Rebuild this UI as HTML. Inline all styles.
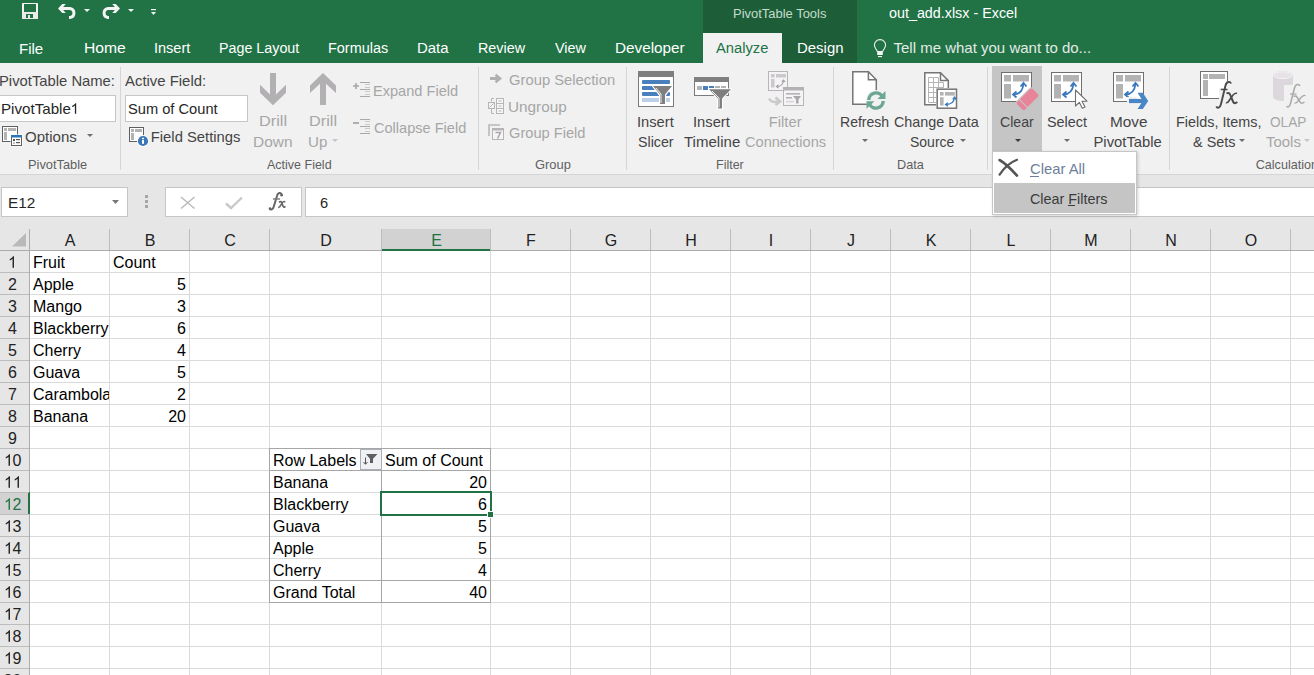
<!DOCTYPE html>
<html><head><meta charset="utf-8">
<style>
html,body{margin:0;padding:0;width:1314px;height:675px;overflow:hidden;background:#fff;font-family:"Liberation Sans",sans-serif}
.a{position:absolute}
.t{position:absolute;line-height:1;white-space:nowrap;transform-origin:0 0}
.bp{display:inline-block;width:0;height:0}
svg{position:absolute;overflow:visible}
</style></head><body>
<!-- title & tabs -->
<div class="a" style="left:0;top:0;width:1314px;height:63px;background:#217346"></div>
<div class="a" style="left:703px;top:0;width:154px;height:63px;background:#1d5e39"></div>
<div class="a" style="left:703px;top:33px;width:79px;height:30px;background:#f1f1f1"></div>
<!-- QAT icons -->
<svg style="left:0;top:0" width="170" height="30" viewBox="0 0 170 30">
 <rect x="22" y="3" width="16" height="16" rx="0.8" fill="#f4f4f4"/>
 <rect x="22" y="12" width="16" height="7" rx="0.8" fill="#ebebeb"/>
 <rect x="24" y="4" width="12" height="8" fill="#217346"/>
 <rect x="26" y="14" width="7" height="4" fill="#217346"/>
 <rect x="28" y="15" width="2" height="3" fill="#ebebeb"/>
 <g>
  <polygon points="58,8.5 62.3,4 65.8,4 61.8,8.5 65.8,13 62.3,13" fill="#f4f4f4"/>
  <path d="M61 8.5 H70 A4.6 4.6 0 0 1 70 17.6 H69" fill="none" stroke="#f4f4f4" stroke-width="3"/>
 </g>
 <g transform="translate(178 0) scale(-1 1)">
  <polygon points="58,8.5 62.3,4 65.8,4 61.8,8.5 65.8,13 62.3,13" fill="#f4f4f4"/>
  <path d="M61 8.5 H70 A4.6 4.6 0 0 1 70 17.6 H69" fill="none" stroke="#f4f4f4" stroke-width="3"/>
 </g>
 <polygon points="84,9 90,9 87,12" fill="#f0f4f1"/>
 <polygon points="128,9 134,9 131,12" fill="#f0f4f1"/>
 <rect x="151" y="9" width="5" height="1.2" fill="#f0f4f1"/>
 <polygon points="151,12 156,12 153.5,15" fill="#f0f4f1"/>
</svg>
<!-- lightbulb -->
<svg style="left:0;top:0" width="900" height="60" viewBox="0 0 900 60">
 <path d="M880 39.6 C876.6 39.6 874.4 42.2 874.4 45.1 C874.4 47.6 876.2 49 877.4 51.5 H882.6 C883.8 49 885.6 47.6 885.6 45.1 C885.6 42.2 883.4 39.6 880 39.6 Z" fill="none" stroke="#f0f0f0" stroke-width="1.1"/>
 <rect x="877.2" y="52" width="5.6" height="3" fill="#f4f4f4"/>
 <rect x="878" y="56" width="4" height="1.1" fill="#f4f4f4"/>
</svg>
<!-- ribbon -->
<div class="a" style="left:0;top:63px;width:1314px;height:111px;background:#f1f1f1"></div>
<div class="a" style="left:0;top:174px;width:1314px;height:1px;background:#d5d5d5"></div>
<div class="a" style="left:0;top:175px;width:1314px;height:54px;background:#e6e6e6"></div>
<!-- separators -->
<div class="a" style="left:120px;top:67px;width:1px;height:103px;background:#d5d5d5"></div>
<div class="a" style="left:478px;top:67px;width:1px;height:103px;background:#d5d5d5"></div>
<div class="a" style="left:626px;top:67px;width:1px;height:103px;background:#d5d5d5"></div>
<div class="a" style="left:833px;top:67px;width:1px;height:103px;background:#d5d5d5"></div>
<div class="a" style="left:987px;top:67px;width:1px;height:103px;background:#d5d5d5"></div>
<div class="a" style="left:1169px;top:67px;width:1px;height:103px;background:#d5d5d5"></div>
<!-- inputs -->
<div class="a" style="left:-1px;top:95px;width:117px;height:27px;background:#fff;border:1px solid #c6c6c6;box-sizing:border-box"></div>
<div class="a" style="left:125px;top:95px;width:123px;height:27px;background:#fff;border:1px solid #c6c6c6;box-sizing:border-box"></div>
<!-- clear highlight -->
<div class="a" style="left:992px;top:66px;width:50px;height:86px;background:#c5c5c5"></div>

<!-- ribbon icons (page coordinates) -->
<svg style="left:0;top:0" width="1314" height="230" viewBox="0 0 1314 230">
 <!-- options -->
 <rect x="2.5" y="126.5" width="15" height="15" fill="#fff" stroke="#5f5f5f"/>
 <rect x="4" y="128" width="3" height="3" fill="#b3b3b3"/><rect x="8" y="128" width="8" height="3" fill="#b3b3b3"/>
 <rect x="4" y="132" width="3" height="8" fill="#b3b3b3"/>
 <rect x="10.5" y="134.5" width="12" height="12" fill="#fff"/>
 <rect x="11.5" y="135.5" width="10" height="10" fill="#fff" stroke="#5f5f5f"/>
 <rect x="11" y="135" width="11" height="2.5" fill="#2e75b6"/>
 <rect x="13" y="139" width="2" height="2" fill="#555"/><rect x="16" y="139" width="4" height="1.2" fill="#555"/>
 <rect x="13" y="142" width="2" height="2" fill="#c5c5c5"/><rect x="16" y="142" width="4" height="1.2" fill="#555"/>
 <polygon points="87,134 93,134 90,137" fill="#6d6d6d"/>
 <!-- field settings -->
 <rect x="129.5" y="127.5" width="14" height="14" fill="#fff" stroke="#5f5f5f"/>
 <rect x="131" y="129" width="3" height="3" fill="#b3b3b3"/><rect x="135" y="129" width="7" height="3" fill="#b3b3b3"/>
 <rect x="131" y="133" width="3" height="7" fill="#b3b3b3"/>
 <circle cx="143" cy="141" r="6" fill="#fff"/>
 <circle cx="143" cy="141" r="5.1" fill="#3c77ba"/>
 <rect x="142" y="137.8" width="2" height="1.2" fill="#fff"/><rect x="142" y="139.8" width="2" height="4" fill="#fff"/>
 <!-- drill down / up -->
 <polygon points="260,84.8 270,94.6 270,73 276,73 276,94.6 286,84.8 286,92.7 273,105.2 260,92.7" fill="#b2b0b2"/>
 <polygon points="323,73 336,85.5 336,93 326,83.8 326,105 320,105 320,83.8 310,93 310,85.5" fill="#b2b0b2"/>
 <polygon points="332,139 338,139 335,142" fill="#c6c6c6"/>
 <!-- expand / collapse -->
 <path d="M353 86h6M356 83v6" stroke="#a6a6a6" stroke-width="1.6"/>
 <path d="M360 82.5h10M360 89.5h10M360 96.5h10" stroke="#a8a8a8" stroke-width="1"/>
 <path d="M365 84.5h5M365 87.5h5M365 91.5h5M365 94.5h5" stroke="#c9c9c9" stroke-width="1"/>
 <path d="M353 123h6" stroke="#a6a6a6" stroke-width="1.8"/>
 <path d="M360 119.5h10M360 126.5h10M360 133.5h10" stroke="#a8a8a8" stroke-width="1"/>
 <path d="M365 121.5h5M365 124.5h5M365 128.5h5M365 131.5h5" stroke="#c9c9c9" stroke-width="1"/>
 <!-- group icons -->
 <path d="M490 78.5h8" stroke="#b0b0b0" stroke-width="3"/>
 <path d="M495.5 74.8 L500 78.5 L495.5 82.2" fill="none" stroke="#b0b0b0" stroke-width="2.6"/>
 <rect x="488.5" y="102.5" width="6" height="6" fill="#f3f3f3" stroke="#b5b5b5"/>
 <path d="M489.5 107.5 L493.5 103.5" stroke="#b5b5b5"/>
 <path d="M494 98.5h-2.5v3M491.5 109v4.5h2.5" fill="none" stroke="#b5b5b5"/>
 <rect x="496.5" y="98.5" width="7" height="15" fill="#f7f7f7" stroke="#b5b5b5"/>
 <path d="M496.5 103.5h7M496.5 108.5h7" stroke="#b5b5b5"/>
 <path d="M498.5 101h3M498.5 106h3M498.5 111h3" stroke="#b5b5b5"/>
 <path d="M489 136V125h11" fill="none" stroke="#b8b8b8" stroke-width="1.6"/>
 <rect x="492.5" y="128.5" width="11" height="11" fill="#f7f4f7" stroke="#b5b5b5"/>
 <rect x="492.5" y="128.5" width="11" height="2" fill="#b5b5b5"/>
 <path d="M495.5 132.5h5l-3 6" fill="none" stroke="#a6a6a6" stroke-width="1.5"/>
 <!-- insert slicer -->
 <rect x="638.5" y="71.5" width="35" height="35" fill="#fff" stroke="#7b7b7b"/>
 <rect x="638" y="71" width="36" height="6" fill="#7f7f7f"/>
 <rect x="642" y="80" width="28" height="4" rx="1" fill="#4a7fbe"/>
 <rect x="642" y="86" width="28" height="4" rx="1" fill="#4a7fbe"/>
 <rect x="642" y="92" width="28" height="4" rx="1" fill="#4a7fbe"/>
 <rect x="642" y="98" width="28" height="4" fill="#bcd0e7"/>
 <path d="M651 85 H673.5 L666 95.5 V105 H659 V95.5 Z" fill="#fff"/>
 <path d="M653 86 H672 L665 94.5 V104 H660 V94.5 Z" fill="#7f7f7f"/>
 <path d="M656 88 L661 94 V103" fill="none" stroke="#fff" stroke-width="0.9"/>
 <!-- insert timeline -->
 <rect x="694.5" y="77.5" width="34" height="18" fill="#fff" stroke="#7b7b7b"/>
 <rect x="694" y="77" width="35" height="5" fill="#7f7f7f"/>
 <rect x="697" y="86" width="5" height="4" fill="#b3b3b3"/>
 <rect x="703" y="86" width="5" height="4" fill="#4a7fbe"/>
 <rect x="709" y="86" width="5" height="2" fill="#4a7fbe"/>
 <rect x="715" y="86" width="5" height="2" fill="#b3b3b3"/>
 <rect x="721" y="86" width="5" height="2" fill="#b3b3b3"/>
 <path d="M707.5 88.5 H732.5 L723 99 V109.5 H717 V99 Z" fill="#fff"/>
 <path d="M709 89.2 H731 L722 98.5 V108.5 H718 V98.5 Z" fill="#7f7f7f"/>
 <path d="M712 91 L719 98 V107.5" fill="none" stroke="#fff" stroke-width="0.9"/>
 <!-- filter connections -->
 <rect x="768.5" y="71.5" width="19" height="19" fill="#f6f3f6" stroke="#b8b5b8"/>
 <rect x="771" y="74" width="3.5" height="3.5" fill="#cbc8cb"/><rect x="776" y="74" width="10" height="3.5" fill="#cbc8cb"/>
 <rect x="771" y="79" width="3.5" height="8.5" fill="#cbc8cb"/>
 <path d="M777 86.5 C780 86.5 783 85 783.5 80.5" fill="none" stroke="#9c9c9c" stroke-width="1.1"/>
 <path d="M778.5 84.8 L776.5 86.5 L778.5 88.2M781.8 82 L783.5 80 L785.2 82" fill="none" stroke="#9c9c9c" stroke-width="1.1"/>
 <rect x="783.5" y="87.5" width="20" height="18" fill="#f6f3f6" stroke="#b8b5b8"/>
 <rect x="783" y="87" width="21" height="3.5" fill="#b5b2b5"/>
 <rect x="786" y="93" width="14" height="1.6" fill="#b5b2b5"/>
 <rect x="786" y="97" width="6" height="1.6" fill="#b5b2b5"/>
 <rect x="786" y="100.8" width="8" height="1.6" fill="#d8d5d8"/>
 <path d="M793 96 H801 L798.5 99.5 V103.5 H796 V99.5 Z" fill="#a9a7a9"/>
 <path d="M769 98.5 C771 102.5 775 102.5 779 101.5" fill="none" stroke="#cacaca" stroke-width="2.4"/>
 <path d="M775.5 97.5 L780 101.5 L775.5 105" fill="none" stroke="#cacaca" stroke-width="2.6"/>
 <!-- refresh -->
 <path d="M852.8 71.8 H868.4 L876.3 79.7 V104.2 H852.8 Z" fill="#fff" stroke="#757575" stroke-width="1.5"/>
 <path d="M868.4 71.8 V79.7 H876.3" fill="none" stroke="#757575" stroke-width="1.5"/>
 <circle cx="876" cy="100" r="10" fill="#f1f1f1"/>
 <path d="M868.8 100 A7.2 7.2 0 0 1 882.5 97" fill="none" stroke="#6ba793" stroke-width="3.4"/>
 <polygon points="885.5,91 885.5,99 877.5,99" fill="#6ba793"/>
 <path d="M883.2 101 A7.2 7.2 0 0 1 869.5 104" fill="none" stroke="#6ba793" stroke-width="3.4"/>
 <polygon points="866.5,101.2 866.5,108.8 874.5,101.2" fill="#6ba793"/>
 <polygon points="862,139 868,139 865,142" fill="#6d6d6d"/>
 <!-- change data source -->
 <path d="M924.8 72.8 H940.5 L948.3 80.6 V104.8 H924.8 Z" fill="#fff" stroke="#757575" stroke-width="1.5"/>
 <path d="M940.5 72.8 V80.6 H948.3" fill="none" stroke="#757575" stroke-width="1.5"/>
 <path d="M928.5 77.5h10M928.5 82.5h15M928.5 87.5h15M928.5 92.5h15M928.5 97.5h15M928.5 102.5h10M928.5 77.5v25M933.5 77.5v25M938.5 77.5v25M943.5 82.5v20" fill="none" stroke="#b5b5b5" stroke-width="1"/>
 <rect x="936" y="88" width="22" height="22" fill="#f1f1f1"/>
 <rect x="937.2" y="89.2" width="19.3" height="19" fill="#fff" stroke="#757575" stroke-width="1.5"/>
 <rect x="940" y="92" width="3.6" height="3.6" fill="#b3b3b3"/><rect x="945" y="92" width="9.8" height="3.6" fill="#b3b3b3"/>
 <rect x="940" y="97.2" width="3.6" height="8.3" fill="#b3b3b3"/>
 <path d="M946 104.5 C950 104.5 954 103 954.5 97.5" fill="none" stroke="#3a78bd" stroke-width="1.3"/>
 <path d="M948 102.8 L945.6 104.5 L948 106.2M952.8 99.5 L954.5 97.2 L956.2 99.5" fill="none" stroke="#3a78bd" stroke-width="1.3"/>
 <polygon points="960,139 966,139 963,142" fill="#6d6d6d"/>
 <!-- clear -->
 <g transform="translate(1001 72)"><rect x="0.5" y="0.5" width="30" height="29" fill="#fff" stroke="#6f6f6f"/>
   <rect x="3" y="3" width="7" height="6.5" fill="#b3b3b3"/><rect x="12" y="3" width="16" height="6.5" fill="#b3b3b3"/>
   <rect x="3" y="12" width="7" height="14.5" fill="#b3b3b3"/><path d="M12.5 22.5 C17 22.5 21.5 20.5 22.5 12" fill="none" stroke="#3a78bd" stroke-width="1.8"/>
   <path d="M15.5 19.5 L12 22.5 L15.5 25.5" fill="none" stroke="#3a78bd" stroke-width="1.8"/>
   <path d="M19.5 14.5 L22.5 11 L25.5 14.5" fill="none" stroke="#3a78bd" stroke-width="1.8"/></g>
 <g transform="translate(1027.6 99.3) rotate(-45)">
  <rect x="-11.5" y="-6" width="23" height="12" rx="2.5" fill="#e8849a" stroke="#c5c5c5" stroke-width="1.2"/>
  <path d="M-6 -6.5 V6.5" stroke="#c5c5c5" stroke-width="1.2"/>
 </g>
 <polygon points="1015,139 1021,139 1018,142" fill="#3a3a3a"/>
 <!-- select -->
 <g transform="translate(1051 72)"><rect x="0.5" y="0.5" width="30" height="29" fill="#fff" stroke="#6f6f6f"/>
   <rect x="3" y="3" width="7" height="6.5" fill="#b3b3b3"/><rect x="12" y="3" width="16" height="6.5" fill="#b3b3b3"/>
   <rect x="3" y="12" width="7" height="14.5" fill="#b3b3b3"/><path d="M12.5 22.5 C17 22.5 21.5 20.5 22.5 12" fill="none" stroke="#3a78bd" stroke-width="1.8"/>
   <path d="M15.5 19.5 L12 22.5 L15.5 25.5" fill="none" stroke="#3a78bd" stroke-width="1.8"/>
   <path d="M19.5 14.5 L22.5 11 L25.5 14.5" fill="none" stroke="#3a78bd" stroke-width="1.8"/></g>
 <path d="M1075.5 90 V106 L1079.3 102.3 L1082.3 108.3 L1085 107 L1082 101.2 L1087 101.2 Z" fill="#fff" stroke="#6f6f6f" stroke-width="1.1" stroke-linejoin="round"/>
 <polygon points="1064,139 1070,139 1067,142" fill="#6d6d6d"/>
 <!-- move -->
 <g transform="translate(1113 72)"><rect x="0.5" y="0.5" width="30" height="29" fill="#fff" stroke="#6f6f6f"/>
   <rect x="3" y="3" width="7" height="6.5" fill="#b3b3b3"/><rect x="12" y="3" width="16" height="6.5" fill="#b3b3b3"/>
   <rect x="3" y="12" width="7" height="14.5" fill="#b3b3b3"/><path d="M12.5 22.5 C17 22.5 21.5 20.5 22.5 12" fill="none" stroke="#3a78bd" stroke-width="1.8"/>
   <path d="M15.5 19.5 L12 22.5 L15.5 25.5" fill="none" stroke="#3a78bd" stroke-width="1.8"/>
   <path d="M19.5 14.5 L22.5 11 L25.5 14.5" fill="none" stroke="#3a78bd" stroke-width="1.8"/></g>
 <rect x="1127" y="97" width="10" height="8" fill="#f1f1f1"/>
 <path d="M1129 101 H1144" stroke="#4a86c5" stroke-width="4.2"/>
 <polygon points="1137.5,92.8 1142.8,92.8 1148.2,101 1142.8,109 1137.5,109 1142.8,101" fill="#4a86c5"/>
 <!-- fields items sets -->
 <rect x="1200.5" y="71.5" width="27" height="27" fill="#fff" stroke="#6f6f6f"/>
 <rect x="1203" y="74" width="5" height="5" fill="#b3b3b3"/><rect x="1209" y="74" width="16" height="5" fill="#b3b3b3"/>
 <rect x="1203" y="80" width="5" height="16" fill="#b3b3b3"/>
 <rect x="1219" y="88" width="20" height="22" fill="#f1f1f1"/>
 <rect x="1226" y="81" width="6" height="8" fill="#f1f1f1"/>
 <path d="M1231 83.5 C1230 81 1226.5 81.3 1225.5 85.5 L1221 104 C1220 108.5 1217.3 108.5 1216.3 106.3" fill="none" stroke="#4a4a4a" stroke-width="1.9"/>
 <path d="M1220.8 89.5 H1227.5" stroke="#4a4a4a" stroke-width="1.5"/>
 <path d="M1226.5 93.5 C1228.5 92.3 1229.5 93 1230.5 95.5 L1233 101.5 C1234 103.8 1235.5 103.5 1237.3 102" fill="none" stroke="#4a4a4a" stroke-width="2"/>
 <path d="M1237 93.5 C1235.5 92.8 1234.5 93.5 1233 95 L1229.5 100 C1228 102.5 1227 103.2 1226 102.5" fill="none" stroke="#4a4a4a" stroke-width="1.6"/>
 <!-- olap -->
 <path d="M1273 75 A10 4 0 0 1 1293 75 V97 A10 4 0 0 1 1273 97 Z" fill="#dcd7dc"/>
 <ellipse cx="1283" cy="75.2" rx="9.3" ry="3.4" fill="#e6e2e6" stroke="#f4f4f4" stroke-width="1"/>
 <rect x="1284" y="85" width="24" height="24" fill="#f1f1f1"/>
 <path d="M1300 86 C1299 83.5 1295.5 83.8 1294.5 88 L1290.5 103.5 C1289.5 107.5 1287.5 107.8 1286.7 106" fill="none" stroke="#a9a9a9" stroke-width="1.5"/>
 <path d="M1290 94 H1296.5" stroke="#a9a9a9" stroke-width="1.2"/>
 <path d="M1293.5 96.5 C1295.5 95.3 1296.5 96 1297.5 98 L1300 102 C1301 103.8 1302.5 103.5 1304.5 102" fill="none" stroke="#a9a9a9" stroke-width="1.5"/>
 <path d="M1305.5 95.5 C1304 94.8 1303 95.5 1301.5 97 L1298 101 C1296.5 103 1295.5 103.5 1294.5 103" fill="none" stroke="#a9a9a9" stroke-width="1.3"/>
 <polygon points="1239,139 1245,139 1242,142" fill="#6d6d6d"/>
 <polygon points="1304,139 1310,139 1307,142" fill="#c6c6c6"/>
</svg>

<!-- formula bar -->
<div class="a" style="left:1px;top:187px;width:127px;height:30px;background:#fff;border:1px solid #c6c6c6;box-sizing:border-box"></div>
<svg style="left:112px;top:200px" width="8" height="5"><polygon points="0,0 7,0 3.5,4" fill="#777"/></svg>
<div class="a" style="left:145px;top:195px;width:3px;height:3px;background:#a6a6a6"></div>
<div class="a" style="left:145px;top:200px;width:3px;height:3px;background:#a6a6a6"></div>
<div class="a" style="left:145px;top:205px;width:3px;height:3px;background:#a6a6a6"></div>
<div class="a" style="left:165px;top:187px;width:137px;height:30px;background:#fff;border:1px solid #c6c6c6;box-sizing:border-box"></div>
<svg style="left:180px;top:196px" width="16" height="14"><path d="M1 1 L14.5 12.5 M14.5 1 L1 12.5" stroke="#bcbcbc" stroke-width="1.6"/></svg>
<svg style="left:225px;top:196px" width="18" height="14"><path d="M1 7.5 L6 12 L17 1.5" fill="none" stroke="#c9c9c9" stroke-width="2.4"/></svg>
<svg style="left:0;top:0" width="400" height="230" viewBox="0 0 400 230">
 <path d="M282 195.8 C281.5 192.2 278 192 277 196 L273.8 206.5 C273 209.8 270.8 210.3 269.6 208.6" fill="none" stroke="#666" stroke-width="2"/>
 <circle cx="281.6" cy="195.2" r="1.3" fill="#666"/><circle cx="270" cy="208.6" r="1.3" fill="#666"/>
 <path d="M273 199 H280" stroke="#777" stroke-width="1.4"/>
 <path d="M279 202.3 C280.5 201 281.5 201.5 282 203.2 L283 206 C283.5 207.5 284.5 207.6 285.3 206.3" fill="none" stroke="#666" stroke-width="1.7"/>
 <path d="M285.2 202.2 C284.2 201 283.2 201.6 282.2 203 L280.2 206 C279.3 207.4 278.8 207.5 278.2 207" fill="none" stroke="#666" stroke-width="1.4"/>
</svg>
<div class="a" style="left:305px;top:187px;width:1010px;height:30px;background:#fff;border:1px solid #c6c6c6;box-sizing:border-box"></div>

<!-- grid -->
<div class="a" style="left:0;top:229px;width:1314px;height:446px;background:#fff"></div>
<div style="position:absolute;left:0;top:229px;width:1314px;height:21px;background:#e6e6e6"></div>
<div style="position:absolute;left:381px;top:229px;width:109px;height:21px;background:#d2d2d2"></div>
<div style="position:absolute;left:0;top:250px;width:1314px;height:1px;background:#ababab"></div>
<div style="position:absolute;left:382px;top:249px;width:108px;height:2px;background:#217346"></div>
<div style="position:absolute;left:0;top:251px;width:29px;height:424px;background:#e6e6e6"></div>
<div style="position:absolute;left:0;top:493px;width:29px;height:21px;background:#d2d2d2"></div>
<div style="position:absolute;left:29px;top:229px;width:1px;height:446px;background:#ababab"></div>
<div style="position:absolute;left:28px;top:492px;width:2px;height:22px;background:#217346"></div>
<svg style="position:absolute;left:12px;top:233px" width="15" height="14"><polygon points="14,0 14,13.5 0,13.5" fill="#b9b9b9"/></svg>
<div style="position:absolute;left:109px;top:251px;width:1px;height:424px;background:#dadada"></div>
<div style="position:absolute;left:109px;top:229px;width:1px;height:21px;background:#bdbdbd"></div>
<div style="position:absolute;left:189px;top:251px;width:1px;height:424px;background:#dadada"></div>
<div style="position:absolute;left:189px;top:229px;width:1px;height:21px;background:#bdbdbd"></div>
<div style="position:absolute;left:269px;top:251px;width:1px;height:424px;background:#dadada"></div>
<div style="position:absolute;left:269px;top:229px;width:1px;height:21px;background:#bdbdbd"></div>
<div style="position:absolute;left:381px;top:251px;width:1px;height:424px;background:#dadada"></div>
<div style="position:absolute;left:381px;top:229px;width:1px;height:21px;background:#bdbdbd"></div>
<div style="position:absolute;left:490px;top:251px;width:1px;height:424px;background:#dadada"></div>
<div style="position:absolute;left:490px;top:229px;width:1px;height:21px;background:#bdbdbd"></div>
<div style="position:absolute;left:570px;top:251px;width:1px;height:424px;background:#dadada"></div>
<div style="position:absolute;left:570px;top:229px;width:1px;height:21px;background:#bdbdbd"></div>
<div style="position:absolute;left:650px;top:251px;width:1px;height:424px;background:#dadada"></div>
<div style="position:absolute;left:650px;top:229px;width:1px;height:21px;background:#bdbdbd"></div>
<div style="position:absolute;left:730px;top:251px;width:1px;height:424px;background:#dadada"></div>
<div style="position:absolute;left:730px;top:229px;width:1px;height:21px;background:#bdbdbd"></div>
<div style="position:absolute;left:810px;top:251px;width:1px;height:424px;background:#dadada"></div>
<div style="position:absolute;left:810px;top:229px;width:1px;height:21px;background:#bdbdbd"></div>
<div style="position:absolute;left:890px;top:251px;width:1px;height:424px;background:#dadada"></div>
<div style="position:absolute;left:890px;top:229px;width:1px;height:21px;background:#bdbdbd"></div>
<div style="position:absolute;left:970px;top:251px;width:1px;height:424px;background:#dadada"></div>
<div style="position:absolute;left:970px;top:229px;width:1px;height:21px;background:#bdbdbd"></div>
<div style="position:absolute;left:1050px;top:251px;width:1px;height:424px;background:#dadada"></div>
<div style="position:absolute;left:1050px;top:229px;width:1px;height:21px;background:#bdbdbd"></div>
<div style="position:absolute;left:1130px;top:251px;width:1px;height:424px;background:#dadada"></div>
<div style="position:absolute;left:1130px;top:229px;width:1px;height:21px;background:#bdbdbd"></div>
<div style="position:absolute;left:1210px;top:251px;width:1px;height:424px;background:#dadada"></div>
<div style="position:absolute;left:1210px;top:229px;width:1px;height:21px;background:#bdbdbd"></div>
<div style="position:absolute;left:1290px;top:251px;width:1px;height:424px;background:#dadada"></div>
<div style="position:absolute;left:1290px;top:229px;width:1px;height:21px;background:#bdbdbd"></div>
<div style="position:absolute;left:1370px;top:251px;width:1px;height:424px;background:#dadada"></div>
<div style="position:absolute;left:1370px;top:229px;width:1px;height:21px;background:#bdbdbd"></div>
<div style="position:absolute;left:30px;top:272px;width:1284px;height:1px;background:#dadada"></div>
<div style="position:absolute;left:0;top:272px;width:29px;height:1px;background:#bdbdbd"></div>
<div style="position:absolute;left:30px;top:294px;width:1284px;height:1px;background:#dadada"></div>
<div style="position:absolute;left:0;top:294px;width:29px;height:1px;background:#bdbdbd"></div>
<div style="position:absolute;left:30px;top:316px;width:1284px;height:1px;background:#dadada"></div>
<div style="position:absolute;left:0;top:316px;width:29px;height:1px;background:#bdbdbd"></div>
<div style="position:absolute;left:30px;top:338px;width:1284px;height:1px;background:#dadada"></div>
<div style="position:absolute;left:0;top:338px;width:29px;height:1px;background:#bdbdbd"></div>
<div style="position:absolute;left:30px;top:360px;width:1284px;height:1px;background:#dadada"></div>
<div style="position:absolute;left:0;top:360px;width:29px;height:1px;background:#bdbdbd"></div>
<div style="position:absolute;left:30px;top:382px;width:1284px;height:1px;background:#dadada"></div>
<div style="position:absolute;left:0;top:382px;width:29px;height:1px;background:#bdbdbd"></div>
<div style="position:absolute;left:30px;top:404px;width:1284px;height:1px;background:#dadada"></div>
<div style="position:absolute;left:0;top:404px;width:29px;height:1px;background:#bdbdbd"></div>
<div style="position:absolute;left:30px;top:426px;width:1284px;height:1px;background:#dadada"></div>
<div style="position:absolute;left:0;top:426px;width:29px;height:1px;background:#bdbdbd"></div>
<div style="position:absolute;left:30px;top:448px;width:1284px;height:1px;background:#dadada"></div>
<div style="position:absolute;left:0;top:448px;width:29px;height:1px;background:#bdbdbd"></div>
<div style="position:absolute;left:30px;top:470px;width:1284px;height:1px;background:#dadada"></div>
<div style="position:absolute;left:0;top:470px;width:29px;height:1px;background:#bdbdbd"></div>
<div style="position:absolute;left:30px;top:492px;width:1284px;height:1px;background:#dadada"></div>
<div style="position:absolute;left:0;top:492px;width:29px;height:1px;background:#bdbdbd"></div>
<div style="position:absolute;left:30px;top:514px;width:1284px;height:1px;background:#dadada"></div>
<div style="position:absolute;left:0;top:514px;width:29px;height:1px;background:#bdbdbd"></div>
<div style="position:absolute;left:30px;top:536px;width:1284px;height:1px;background:#dadada"></div>
<div style="position:absolute;left:0;top:536px;width:29px;height:1px;background:#bdbdbd"></div>
<div style="position:absolute;left:30px;top:558px;width:1284px;height:1px;background:#dadada"></div>
<div style="position:absolute;left:0;top:558px;width:29px;height:1px;background:#bdbdbd"></div>
<div style="position:absolute;left:30px;top:580px;width:1284px;height:1px;background:#dadada"></div>
<div style="position:absolute;left:0;top:580px;width:29px;height:1px;background:#bdbdbd"></div>
<div style="position:absolute;left:30px;top:602px;width:1284px;height:1px;background:#dadada"></div>
<div style="position:absolute;left:0;top:602px;width:29px;height:1px;background:#bdbdbd"></div>
<div style="position:absolute;left:30px;top:624px;width:1284px;height:1px;background:#dadada"></div>
<div style="position:absolute;left:0;top:624px;width:29px;height:1px;background:#bdbdbd"></div>
<div style="position:absolute;left:30px;top:646px;width:1284px;height:1px;background:#dadada"></div>
<div style="position:absolute;left:0;top:646px;width:29px;height:1px;background:#bdbdbd"></div>
<div style="position:absolute;left:30px;top:668px;width:1284px;height:1px;background:#dadada"></div>
<div style="position:absolute;left:0;top:668px;width:29px;height:1px;background:#bdbdbd"></div>
<div class="t" style="left:30px;width:80px;top:233.4px;font-size:16px;text-align:center;color:#222">A</div>
<div class="t" style="left:110px;width:80px;top:233.4px;font-size:16px;text-align:center;color:#222">B</div>
<div class="t" style="left:190px;width:80px;top:233.4px;font-size:16px;text-align:center;color:#222">C</div>
<div class="t" style="left:270px;width:112px;top:233.4px;font-size:16px;text-align:center;color:#222">D</div>
<div class="t" style="left:382px;width:109px;top:233.4px;font-size:16px;text-align:center;color:#217346">E</div>
<div class="t" style="left:491px;width:80px;top:233.4px;font-size:16px;text-align:center;color:#222">F</div>
<div class="t" style="left:571px;width:80px;top:233.4px;font-size:16px;text-align:center;color:#222">G</div>
<div class="t" style="left:651px;width:80px;top:233.4px;font-size:16px;text-align:center;color:#222">H</div>
<div class="t" style="left:731px;width:80px;top:233.4px;font-size:16px;text-align:center;color:#222">I</div>
<div class="t" style="left:811px;width:80px;top:233.4px;font-size:16px;text-align:center;color:#222">J</div>
<div class="t" style="left:891px;width:80px;top:233.4px;font-size:16px;text-align:center;color:#222">K</div>
<div class="t" style="left:971px;width:80px;top:233.4px;font-size:16px;text-align:center;color:#222">L</div>
<div class="t" style="left:1051px;width:80px;top:233.4px;font-size:16px;text-align:center;color:#222">M</div>
<div class="t" style="left:1131px;width:80px;top:233.4px;font-size:16px;text-align:center;color:#222">N</div>
<div class="t" style="left:1211px;width:80px;top:233.4px;font-size:16px;text-align:center;color:#222">O</div>
<div class="t" style="left:1291px;width:80px;top:233.4px;font-size:16px;text-align:center;color:#222">P</div>
<div class="t" style="left:0;width:25px;top:255.4px;font-size:16px;text-align:center;color:#222"><svg style="position:static;display:inline-block;vertical-align:1px;overflow:visible" width="8.90" height="11.72" viewBox="0 0 1139 1500"><path d="M763 1500 H583 V353 Q518 415 413 477 Q308 539 224 570 V396 Q375 325 488 224 Q601 123 648 28 H763 Z" fill="currentColor"/></svg></div>
<div class="t" style="left:0;width:25px;top:277.4px;font-size:16px;text-align:center;color:#222">2</div>
<div class="t" style="left:0;width:25px;top:299.4px;font-size:16px;text-align:center;color:#222">3</div>
<div class="t" style="left:0;width:25px;top:321.4px;font-size:16px;text-align:center;color:#222">4</div>
<div class="t" style="left:0;width:25px;top:343.4px;font-size:16px;text-align:center;color:#222">5</div>
<div class="t" style="left:0;width:25px;top:365.4px;font-size:16px;text-align:center;color:#222">6</div>
<div class="t" style="left:0;width:25px;top:387.4px;font-size:16px;text-align:center;color:#222">7</div>
<div class="t" style="left:0;width:25px;top:409.4px;font-size:16px;text-align:center;color:#222">8</div>
<div class="t" style="left:0;width:25px;top:431.4px;font-size:16px;text-align:center;color:#222">9</div>
<div class="t" style="left:0;width:25px;top:453.4px;font-size:16px;text-align:center;color:#222"><svg style="position:static;display:inline-block;vertical-align:1px;overflow:visible" width="8.90" height="11.72" viewBox="0 0 1139 1500"><path d="M763 1500 H583 V353 Q518 415 413 477 Q308 539 224 570 V396 Q375 325 488 224 Q601 123 648 28 H763 Z" fill="currentColor"/></svg>0</div>
<div class="t" style="left:0;width:25px;top:475.4px;font-size:16px;text-align:center;color:#222"><svg style="position:static;display:inline-block;vertical-align:1px;overflow:visible" width="8.90" height="11.72" viewBox="0 0 1139 1500"><path d="M763 1500 H583 V353 Q518 415 413 477 Q308 539 224 570 V396 Q375 325 488 224 Q601 123 648 28 H763 Z" fill="currentColor"/></svg><svg style="position:static;display:inline-block;vertical-align:1px;overflow:visible" width="8.90" height="11.72" viewBox="0 0 1139 1500"><path d="M763 1500 H583 V353 Q518 415 413 477 Q308 539 224 570 V396 Q375 325 488 224 Q601 123 648 28 H763 Z" fill="currentColor"/></svg></div>
<div class="t" style="left:0;width:25px;top:497.4px;font-size:16px;text-align:center;color:#217346"><svg style="position:static;display:inline-block;vertical-align:1px;overflow:visible" width="8.90" height="11.72" viewBox="0 0 1139 1500"><path d="M763 1500 H583 V353 Q518 415 413 477 Q308 539 224 570 V396 Q375 325 488 224 Q601 123 648 28 H763 Z" fill="currentColor"/></svg>2</div>
<div class="t" style="left:0;width:25px;top:519.4px;font-size:16px;text-align:center;color:#222"><svg style="position:static;display:inline-block;vertical-align:1px;overflow:visible" width="8.90" height="11.72" viewBox="0 0 1139 1500"><path d="M763 1500 H583 V353 Q518 415 413 477 Q308 539 224 570 V396 Q375 325 488 224 Q601 123 648 28 H763 Z" fill="currentColor"/></svg>3</div>
<div class="t" style="left:0;width:25px;top:541.4px;font-size:16px;text-align:center;color:#222"><svg style="position:static;display:inline-block;vertical-align:1px;overflow:visible" width="8.90" height="11.72" viewBox="0 0 1139 1500"><path d="M763 1500 H583 V353 Q518 415 413 477 Q308 539 224 570 V396 Q375 325 488 224 Q601 123 648 28 H763 Z" fill="currentColor"/></svg>4</div>
<div class="t" style="left:0;width:25px;top:563.4px;font-size:16px;text-align:center;color:#222"><svg style="position:static;display:inline-block;vertical-align:1px;overflow:visible" width="8.90" height="11.72" viewBox="0 0 1139 1500"><path d="M763 1500 H583 V353 Q518 415 413 477 Q308 539 224 570 V396 Q375 325 488 224 Q601 123 648 28 H763 Z" fill="currentColor"/></svg>5</div>
<div class="t" style="left:0;width:25px;top:585.4px;font-size:16px;text-align:center;color:#222"><svg style="position:static;display:inline-block;vertical-align:1px;overflow:visible" width="8.90" height="11.72" viewBox="0 0 1139 1500"><path d="M763 1500 H583 V353 Q518 415 413 477 Q308 539 224 570 V396 Q375 325 488 224 Q601 123 648 28 H763 Z" fill="currentColor"/></svg>6</div>
<div class="t" style="left:0;width:25px;top:607.4px;font-size:16px;text-align:center;color:#222"><svg style="position:static;display:inline-block;vertical-align:1px;overflow:visible" width="8.90" height="11.72" viewBox="0 0 1139 1500"><path d="M763 1500 H583 V353 Q518 415 413 477 Q308 539 224 570 V396 Q375 325 488 224 Q601 123 648 28 H763 Z" fill="currentColor"/></svg>7</div>
<div class="t" style="left:0;width:25px;top:629.4px;font-size:16px;text-align:center;color:#222"><svg style="position:static;display:inline-block;vertical-align:1px;overflow:visible" width="8.90" height="11.72" viewBox="0 0 1139 1500"><path d="M763 1500 H583 V353 Q518 415 413 477 Q308 539 224 570 V396 Q375 325 488 224 Q601 123 648 28 H763 Z" fill="currentColor"/></svg>8</div>
<div class="t" style="left:0;width:25px;top:651.4px;font-size:16px;text-align:center;color:#222"><svg style="position:static;display:inline-block;vertical-align:1px;overflow:visible" width="8.90" height="11.72" viewBox="0 0 1139 1500"><path d="M763 1500 H583 V353 Q518 415 413 477 Q308 539 224 570 V396 Q375 325 488 224 Q601 123 648 28 H763 Z" fill="currentColor"/></svg>9</div>
<div class="t" style="left:0;width:25px;top:673.4px;font-size:16px;text-align:center;color:#222">20</div>
<div class="t" style="left:33px;top:255.4px;font-size:16px;color:#000;white-space:nowrap;max-width:76px;overflow:hidden">Fruit</div>
<div class="t" style="left:113px;top:255.4px;font-size:16px;color:#000;white-space:nowrap;max-width:76px;overflow:hidden">Count</div>
<div class="t" style="left:33px;top:277.4px;font-size:16px;color:#000;white-space:nowrap;max-width:76px;overflow:hidden">Apple</div>
<div class="t" style="left:110px;width:76px;top:277.4px;font-size:16px;text-align:right;color:#000">5</div>
<div class="t" style="left:33px;top:299.4px;font-size:16px;color:#000;white-space:nowrap;max-width:76px;overflow:hidden">Mango</div>
<div class="t" style="left:110px;width:76px;top:299.4px;font-size:16px;text-align:right;color:#000">3</div>
<div class="t" style="left:33px;top:321.4px;font-size:16px;color:#000;white-space:nowrap;max-width:76px;overflow:hidden">Blackberry</div>
<div class="t" style="left:110px;width:76px;top:321.4px;font-size:16px;text-align:right;color:#000">6</div>
<div class="t" style="left:33px;top:343.4px;font-size:16px;color:#000;white-space:nowrap;max-width:76px;overflow:hidden">Cherry</div>
<div class="t" style="left:110px;width:76px;top:343.4px;font-size:16px;text-align:right;color:#000">4</div>
<div class="t" style="left:33px;top:365.4px;font-size:16px;color:#000;white-space:nowrap;max-width:76px;overflow:hidden">Guava</div>
<div class="t" style="left:110px;width:76px;top:365.4px;font-size:16px;text-align:right;color:#000">5</div>
<div class="t" style="left:33px;top:387.4px;font-size:16px;color:#000;white-space:nowrap;max-width:76px;overflow:hidden">Carambola</div>
<div class="t" style="left:110px;width:76px;top:387.4px;font-size:16px;text-align:right;color:#000">2</div>
<div class="t" style="left:33px;top:409.4px;font-size:16px;color:#000;white-space:nowrap;max-width:76px;overflow:hidden">Banana</div>
<div class="t" style="left:110px;width:76px;top:409.4px;font-size:16px;text-align:right;color:#000">20</div>
<div class="t" style="left:273px;top:453.4px;font-size:16px;color:#000;white-space:nowrap;max-width:108px;overflow:hidden">Row Labels</div>
<div class="t" style="left:385px;top:453.4px;font-size:16px;color:#000;white-space:nowrap;max-width:105px;overflow:hidden">Sum of Count</div>
<div class="t" style="left:273px;top:475.4px;font-size:16px;color:#000;white-space:nowrap;max-width:108px;overflow:hidden">Banana</div>
<div class="t" style="left:382px;width:105px;top:475.4px;font-size:16px;text-align:right;color:#000">20</div>
<div class="t" style="left:273px;top:497.4px;font-size:16px;color:#000;white-space:nowrap;max-width:108px;overflow:hidden">Blackberry</div>
<div class="t" style="left:382px;width:105px;top:497.4px;font-size:16px;text-align:right;color:#000">6</div>
<div class="t" style="left:273px;top:519.4px;font-size:16px;color:#000;white-space:nowrap;max-width:108px;overflow:hidden">Guava</div>
<div class="t" style="left:382px;width:105px;top:519.4px;font-size:16px;text-align:right;color:#000">5</div>
<div class="t" style="left:273px;top:541.4px;font-size:16px;color:#000;white-space:nowrap;max-width:108px;overflow:hidden">Apple</div>
<div class="t" style="left:382px;width:105px;top:541.4px;font-size:16px;text-align:right;color:#000">5</div>
<div class="t" style="left:273px;top:563.4px;font-size:16px;color:#000;white-space:nowrap;max-width:108px;overflow:hidden">Cherry</div>
<div class="t" style="left:382px;width:105px;top:563.4px;font-size:16px;text-align:right;color:#000">4</div>
<div class="t" style="left:273px;top:585.4px;font-size:16px;color:#000;white-space:nowrap;max-width:108px;overflow:hidden">Grand Total</div>
<div class="t" style="left:382px;width:105px;top:585.4px;font-size:16px;text-align:right;color:#000">40</div>
<div style="position:absolute;left:269px;top:448px;width:222px;height:1px;background:#a6a6a6"></div>
<div style="position:absolute;left:269px;top:470px;width:222px;height:1px;background:#a6a6a6"></div>
<div style="position:absolute;left:269px;top:580px;width:222px;height:1px;background:#a6a6a6"></div>
<div style="position:absolute;left:269px;top:602px;width:222px;height:1px;background:#a6a6a6"></div>
<div style="position:absolute;left:269px;top:448px;width:1px;height:155px;background:#a6a6a6"></div>
<div style="position:absolute;left:381px;top:448px;width:1px;height:155px;background:#a6a6a6"></div>
<div style="position:absolute;left:490px;top:448px;width:1px;height:155px;background:#a6a6a6"></div>
<div style="position:absolute;left:360px;top:449px;width:22px;height:21px;background:#eff1f5;border:1px solid #a9b0ba;box-sizing:border-box"></div>
<svg style="position:absolute;left:0;top:0" width="400" height="480" viewBox="0 0 400 480"><polygon points="366,454 377.5,454 373,458.8 373,463 370,463 370,458.8" fill="#5f5f5f"/><path d="M365.5 457.5 V464" stroke="#555" stroke-width="1"/><path d="M363.5 462 L365.5 464.3 L367.5 462" fill="none" stroke="#555" stroke-width="1"/></svg>
<div style="position:absolute;left:380px;top:491px;width:112px;height:25px;border:2px solid #217346;box-sizing:border-box"></div>
<div style="position:absolute;left:488px;top:512px;width:5px;height:5px;background:#217346;border:1px solid #fff;box-sizing:content-box;margin:-1px"></div>

<!-- dropdown menu -->
<div class="a" style="left:992px;top:151px;width:145px;height:64px;background:#fff;border:1px solid #c6c6c6;box-sizing:border-box;box-shadow:1px 1px 3px rgba(0,0,0,0.18)"></div>
<div class="a" style="left:994px;top:183px;width:141px;height:30px;background:#c5c5c5"></div>
<svg style="left:0;top:0" width="1100" height="200" viewBox="0 0 1100 200">
 <path d="M999.5 160 C1005 163 1011 169 1017 175.6" fill="none" stroke="#555" stroke-width="2.6" stroke-linecap="round"/>
 <path d="M1017 159.8 C1010 162.5 1004 168 999.6 174.6" fill="none" stroke="#555" stroke-width="2.2" stroke-linecap="round"/>
</svg>

<span class="t" style="left:732.6px;top:7.01px;font-size:13.2px;color:#c3dccb;transform:scaleX(0.9831);">PivotTable Tools<i class="bp"></i></span>
<span class="t" style="left:889.4px;top:5.00px;font-size:15.5px;color:#ffffff;transform:scaleX(0.9243);">out_add.xlsx - Excel<i class="bp"></i></span>
<span class="t" style="left:19.0px;top:41.00px;font-size:15.4px;color:#ffffff;transform:scaleX(0.9768);">File<i class="bp"></i></span>
<span class="t" style="left:84.4px;top:40.00px;font-size:15.4px;color:#ffffff;transform:scaleX(1.0179);">Home<i class="bp"></i></span>
<span class="t" style="left:154.1px;top:40.00px;font-size:15.4px;color:#ffffff;transform:scaleX(0.9420);">Insert<i class="bp"></i></span>
<span class="t" style="left:219.1px;top:40.00px;font-size:15.4px;color:#ffffff;transform:scaleX(0.9286);">Page Layout<i class="bp"></i></span>
<span class="t" style="left:328.4px;top:40.00px;font-size:15.4px;color:#ffffff;transform:scaleX(0.9378);">Formulas<i class="bp"></i></span>
<span class="t" style="left:417.3px;top:40.00px;font-size:15.4px;color:#ffffff;transform:scaleX(0.9703);">Data<i class="bp"></i></span>
<span class="t" style="left:478.1px;top:40.00px;font-size:15.4px;color:#ffffff;transform:scaleX(0.9315);">Review<i class="bp"></i></span>
<span class="t" style="left:554.8px;top:40.00px;font-size:15.4px;color:#ffffff;transform:scaleX(0.9362);">View<i class="bp"></i></span>
<span class="t" style="left:615.4px;top:40.00px;font-size:15.4px;color:#ffffff;transform:scaleX(0.9938);">Developer<i class="bp"></i></span>
<span class="t" style="left:796.5px;top:40.00px;font-size:15.4px;color:#ffffff;transform:scaleX(0.9709);">Design<i class="bp"></i></span>
<span class="t" style="left:716.0px;top:40.00px;font-size:15.4px;color:#217346;transform:scaleX(0.9558);">Analyze<i class="bp"></i></span>
<span class="t" style="left:893.5px;top:40.00px;font-size:15.0px;color:#e2ebe5;">Tell me what you want to do...<i class="bp"></i></span>
<span class="t" style="left:-1.0px;top:74.01px;font-size:14.8px;color:#444444;">PivotTable Name:<i class="bp"></i></span>
<span class="t" style="left:1.0px;top:102.01px;font-size:14.8px;color:#262626;transform:scaleX(1.0230);">PivotTable<svg style="position:static;display:inline-block;vertical-align:0;overflow:visible" width="8.23" height="10.84" viewBox="0 0 1139 1500"><path d="M763 1500 H583 V353 Q518 415 413 477 Q308 539 224 570 V396 Q375 325 488 224 Q601 123 648 28 H763 Z" fill="currentColor"/></svg><i class="bp"></i></span>
<span class="t" style="left:25.4px;top:130.01px;font-size:14.8px;color:#444444;transform:scaleX(1.0159);">Options<i class="bp"></i></span>
<span class="t" style="left:27.5px;top:159.01px;font-size:12.6px;color:#5f5f5f;transform:scaleX(1.0175);">PivotTable<i class="bp"></i></span>
<span class="t" style="left:125.0px;top:74.01px;font-size:14.8px;color:#444444;transform:scaleX(1.0066);">Active Field:<i class="bp"></i></span>
<span class="t" style="left:128.3px;top:102.01px;font-size:14.8px;color:#262626;transform:scaleX(0.9905);">Sum of Count<i class="bp"></i></span>
<span class="t" style="left:150.8px;top:130.01px;font-size:14.8px;color:#444444;">Field Settings<i class="bp"></i></span>
<span class="t" style="left:258.7px;top:114.01px;font-size:14.8px;color:#a6a6a6;transform:scaleX(1.0997);">Drill<i class="bp"></i></span>
<span class="t" style="left:252.6px;top:135.01px;font-size:14.8px;color:#a6a6a6;transform:scaleX(1.0437);">Down<i class="bp"></i></span>
<span class="t" style="left:308.9px;top:114.01px;font-size:14.8px;color:#a6a6a6;transform:scaleX(1.0997);">Drill<i class="bp"></i></span>
<span class="t" style="left:307.7px;top:135.01px;font-size:14.8px;color:#a6a6a6;transform:scaleX(1.0234);">Up<i class="bp"></i></span>
<span class="t" style="left:373.3px;top:84.01px;font-size:14.8px;color:#a6a6a6;transform:scaleX(0.9854);">Expand Field<i class="bp"></i></span>
<span class="t" style="left:374.3px;top:121.01px;font-size:14.8px;color:#a6a6a6;transform:scaleX(0.9836);">Collapse Field<i class="bp"></i></span>
<span class="t" style="left:267.2px;top:159.01px;font-size:12.6px;color:#5f5f5f;transform:scaleX(0.9925);">Active Field<i class="bp"></i></span>
<span class="t" style="left:509.0px;top:73.01px;font-size:14.8px;color:#a6a6a6;">Group Selection<i class="bp"></i></span>
<span class="t" style="left:508.0px;top:100.01px;font-size:14.8px;color:#a6a6a6;transform:scaleX(1.0337);">Ungroup<i class="bp"></i></span>
<span class="t" style="left:509.0px;top:126.01px;font-size:14.8px;color:#a6a6a6;transform:scaleX(0.9886);">Group Field<i class="bp"></i></span>
<span class="t" style="left:534.5px;top:159.01px;font-size:12.6px;color:#5f5f5f;transform:scaleX(1.0258);">Group<i class="bp"></i></span>
<span class="t" style="left:637.3px;top:115.01px;font-size:14.8px;color:#444444;transform:scaleX(0.9918);">Insert<i class="bp"></i></span>
<span class="t" style="left:638.3px;top:135.01px;font-size:14.8px;color:#444444;transform:scaleX(0.9603);">Slicer<i class="bp"></i></span>
<span class="t" style="left:693.3px;top:115.01px;font-size:14.8px;color:#444444;transform:scaleX(0.9946);">Insert<i class="bp"></i></span>
<span class="t" style="left:683.7px;top:135.01px;font-size:14.8px;color:#444444;transform:scaleX(1.0157);">Timeline<i class="bp"></i></span>
<span class="t" style="left:768.7px;top:115.01px;font-size:14.8px;color:#a6a6a6;">Filter<i class="bp"></i></span>
<span class="t" style="left:745.3px;top:135.01px;font-size:14.8px;color:#a6a6a6;transform:scaleX(0.9858);">Connections<i class="bp"></i></span>
<span class="t" style="left:715.6px;top:159.01px;font-size:12.6px;color:#5f5f5f;transform:scaleX(0.9928);">Filter<i class="bp"></i></span>
<span class="t" style="left:839.8px;top:115.01px;font-size:14.8px;color:#444444;transform:scaleX(0.9490);">Refresh<i class="bp"></i></span>
<span class="t" style="left:894.0px;top:115.01px;font-size:14.8px;color:#444444;transform:scaleX(0.9708);">Change Data<i class="bp"></i></span>
<span class="t" style="left:910.4px;top:135.01px;font-size:14.8px;color:#444444;transform:scaleX(0.9453);">Source<i class="bp"></i></span>
<span class="t" style="left:896.6px;top:159.01px;font-size:12.6px;color:#5f5f5f;transform:scaleX(1.0079);">Data<i class="bp"></i></span>
<span class="t" style="left:999.7px;top:115.01px;font-size:14.8px;color:#444444;transform:scaleX(0.9568);">Clear<i class="bp"></i></span>
<span class="t" style="left:1047.0px;top:115.01px;font-size:14.8px;color:#444444;transform:scaleX(0.9728);">Select<i class="bp"></i></span>
<span class="t" style="left:1109.6px;top:115.01px;font-size:14.8px;color:#444444;transform:scaleX(1.0357);">Move<i class="bp"></i></span>
<span class="t" style="left:1093.5px;top:135.01px;font-size:14.8px;color:#444444;">PivotTable<i class="bp"></i></span>
<span class="t" style="left:1175.6px;top:115.01px;font-size:14.8px;color:#444444;transform:scaleX(0.9724);">Fields, Items,<i class="bp"></i></span>
<span class="t" style="left:1192.6px;top:135.01px;font-size:14.8px;color:#444444;transform:scaleX(0.9748);">&amp; Sets<i class="bp"></i></span>
<span class="t" style="left:1269.9px;top:115.01px;font-size:14.8px;color:#a6a6a6;transform:scaleX(0.9215);">OLAP<i class="bp"></i></span>
<span class="t" style="left:1265.5px;top:135.01px;font-size:14.8px;color:#a6a6a6;transform:scaleX(1.0104);">Tools<i class="bp"></i></span>
<span class="t" style="left:1255.7px;top:159.01px;font-size:12.6px;color:#5f5f5f;">Calculation<i class="bp"></i></span>
<span class="t" style="left:1030.0px;top:162.01px;font-size:14.8px;color:#6d7f99;">Clear All<i class="bp"></i></span>
<span class="t" style="left:1030.0px;top:192.01px;font-size:14.8px;color:#3b3b3b;transform:scaleX(0.9704);">Clear Filters<i class="bp"></i></span>
<span class="t" style="left:7.7px;top:195.00px;font-size:15.2px;color:#262626;transform:scaleX(1.0087);">E12<i class="bp"></i></span>
<span class="t" style="left:319.6px;top:195.00px;font-size:15.2px;color:#262626;transform:scaleX(0.9625);">6<i class="bp"></i></span>
<!-- underlines for accelerators -->
<div class="a" style="left:1030px;top:176px;width:9px;height:1px;background:#6d7f99"></div>
<div class="a" style="left:1068px;top:205px;width:7px;height:1px;background:#3b3b3b"></div>
</body></html>
